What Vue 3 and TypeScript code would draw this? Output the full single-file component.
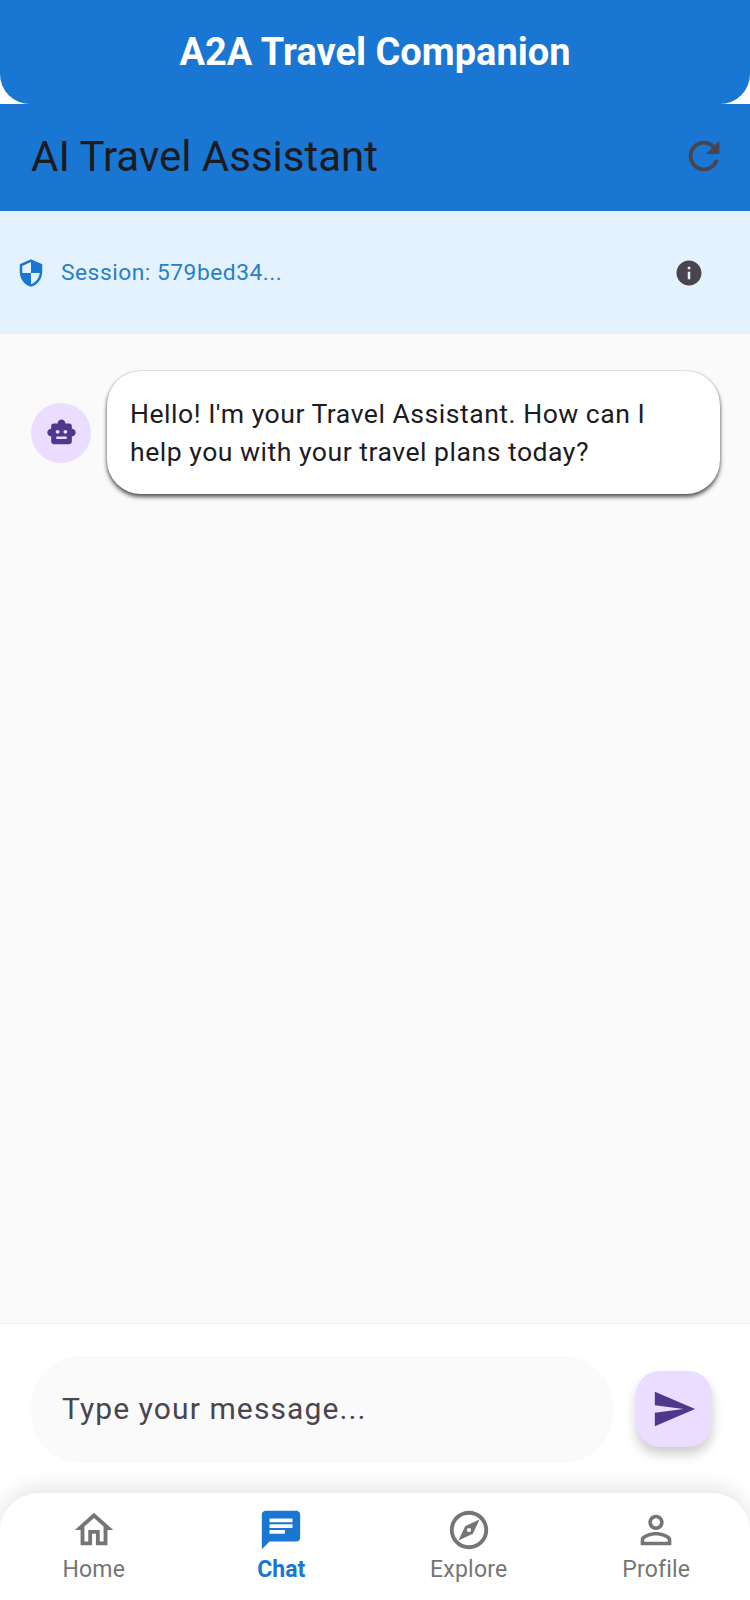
<script setup lang="ts">
interface NavItem {
  label: string
  path: string
  active?: boolean
}

const navItems: NavItem[] = [
  { label: 'Home', path: 'M12 5.69l5 4.5V18h-2v-6H9v6H7v-7.81l5-4.5M12 3L2 12h3v8h6v-6h2v6h6v-8h3L12 3z' },
  {
    label: 'Chat',
    active: true,
    path: 'M20 2H4c-1.1 0-1.99.9-1.99 2L2 22l4-4h14c1.1 0 2-.9 2-2V4c0-1.1-.9-2-2-2zM6 9h12v2H6V9zm8 5H6v-2h8v2zm4-6H6V6h12v2z',
  },
  {
    label: 'Explore',
    path: 'M12 2C6.48 2 2 6.48 2 12s4.48 10 10 10 10-4.48 10-10S17.52 2 12 2zm0 18c-4.41 0-8-3.59-8-8s3.59-8 8-8 8 3.59 8 8-3.59 8-8 8zm-5.5-2.5l7.51-3.49L17.5 6.5 9.99 9.99 6.5 17.5zm5.5-6.6c.61 0 1.1.49 1.1 1.1s-.49 1.1-1.1 1.1-1.1-.49-1.1-1.1.49-1.1 1.1-1.1z',
  },
  {
    label: 'Profile',
    path: 'M12 5.9c1.16 0 2.1.94 2.1 2.1s-.94 2.1-2.1 2.1S9.9 9.16 9.9 8s.94-2.1 2.1-2.1m0 9c2.97 0 6.1 1.46 6.1 2.1v1.1H5.9V17c0-.64 3.13-2.1 6.1-2.1M12 4C9.79 4 8 5.79 8 8s1.79 4 4 4 4-1.79 4-4-1.79-4-4-4zm0 9c-2.67 0-8 1.34-8 4v3h16v-3c0-2.66-5.33-4-8-4z',
  },
]
</script>

<template>
  <div class="screen">
    <header class="top-bar">A2A Travel Companion</header>

    <div class="app-bar">
      <span class="app-bar-title">AI Travel Assistant</span>
      <svg class="icon-refresh" viewBox="0 0 24 24">
        <path d="M17.65 6.35C16.2 4.9 14.21 4 12 4c-4.42 0-7.99 3.58-7.99 8s3.57 8 7.99 8c3.73 0 6.84-2.55 7.73-6h-2.08c-.82 2.33-3.04 4-5.65 4-3.31 0-6-2.69-6-6s2.69-6 6-6c1.66 0 3.14.69 4.22 1.78L13 11h7V4l-2.35 2.35z" />
      </svg>
    </div>

    <div class="session">
      <svg class="icon-shield" viewBox="0 0 24 24">
        <path d="M12 1L3 5v6c0 5.55 3.84 10.74 9 12 5.16-1.26 9-6.45 9-12V5l-9-4zm0 10.99h7c-.53 4.12-3.28 7.79-7 8.94V12H5V6.3l7-3.11v8.8z" />
      </svg>
      <span class="session-text">Session: 579bed34...</span>
      <svg class="icon-info" viewBox="0 0 24 24">
        <path d="M12 2C6.48 2 2 6.48 2 12s4.48 10 10 10 10-4.48 10-10S17.52 2 12 2zm1 15h-2v-6h2v6zm0-8h-2V7h2v2z" />
      </svg>
    </div>

    <main class="messages">
      <div class="message">
        <div class="avatar">
          <svg class="icon-bot" viewBox="0 0 24 24">
            <path d="M20 9V7c0-1.1-.9-2-2-2h-3c0-1.66-1.34-3-3-3S9 3.34 9 5H6c-1.1 0-2 .9-2 2v2c-1.66 0-3 1.34-3 3s1.34 3 3 3v4c0 1.1.9 2 2 2h12c1.1 0 2-.9 2-2v-4c1.66 0 3-1.34 3-3s-1.34-3-3-3zM7.5 11.5C7.5 10.67 8.17 10 9 10s1.5.67 1.5 1.5S9.83 13 9 13s-1.5-.67-1.5-1.5zM16 17H8v-2h8v2zm-1-4c-.83 0-1.5-.67-1.5-1.5S14.17 10 15 10s1.5.67 1.5 1.5S15.83 13 15 13z" />
          </svg>
        </div>
        <div class="bubble">Hello! I'm your Travel Assistant. How can I help you with your travel plans today?</div>
      </div>
    </main>

    <div class="composer">
      <div class="input">Type your message...</div>
      <button class="send" type="button" aria-label="Send">
        <svg class="icon-send" viewBox="0 0 24 24">
          <path d="M2.01 21L23 12 2.01 3 2 10l15 2-15 2z" />
        </svg>
      </button>
    </div>

    <nav class="bottom-nav">
      <div
        v-for="item in navItems"
        :key="item.label"
        class="nav-item"
        :class="{ 'nav-item--active': item.active }"
      >
        <svg class="nav-icon" viewBox="0 0 24 24"><path :d="item.path" /></svg>
        <span class="nav-label">{{ item.label }}</span>
      </div>
    </nav>
  </div>
</template>

<style>
html,
body {
  margin: 0;
  background: #fff;
}
</style>

<style scoped>
.screen {
  display: flex;
  flex-direction: column;
  width: 750px;
  height: 1600px;
  overflow: hidden;
  background: #fff;
  font-family: Roboto, 'Liberation Sans', sans-serif;
}

svg {
  display: block;
  flex-shrink: 0;
  fill: currentColor;
}

.top-bar {
  display: flex;
  align-items: center;
  justify-content: center;
  height: 104px;
  border-radius: 0 0 30px 30px;
  background: #1976d2;
  color: #fff;
  font-size: 38px;
  font-weight: 700;
}

.app-bar {
  display: flex;
  align-items: center;
  justify-content: space-between;
  height: 107px;
  padding: 0 23px 3px 31px;
  box-sizing: border-box;
  background: #1976d2;
  color: #1c1b1f;
}

.app-bar-title {
  font-size: 42px;
}

.icon-refresh {
  width: 46px;
  height: 46px;
  color: #49454f;
}

.session {
  display: flex;
  align-items: center;
  height: 123px;
  padding: 0 46px 0 16px;
  box-sizing: border-box;
  background: #e3f2fd;
}

.icon-shield {
  width: 30px;
  height: 30px;
  color: #1976d2;
}

.session-text {
  flex: 1;
  margin-left: 15px;
  color: #2a7fc4;
  font-size: 22.8px;
  letter-spacing: 0.5px;
}

.icon-info {
  width: 30px;
  height: 30px;
  color: #49454f;
}

.messages {
  flex: 1;
  padding: 37px 30px 0 31px;
  background: #fafafa;
}

.message {
  display: flex;
  align-items: center;
  gap: 16px;
}

.avatar {
  display: flex;
  align-items: center;
  justify-content: center;
  width: 60px;
  height: 60px;
  border-radius: 50%;
  background: #eaddff;
  flex-shrink: 0;
}

.icon-bot {
  width: 31px;
  height: 31px;
  color: #4f378b;
}

.bubble {
  flex: 1;
  padding: 24px 60px 23px 23px;
  border-radius: 34px;
  background: #fff;
  box-shadow: 0 3px 4px rgba(0, 0, 0, 0.65), 0 0 2px rgba(0, 0, 0, 0.25);
  color: #1c1b1f;
  font-size: 26.6px;
  line-height: 38px;
  letter-spacing: 0.5px;
}

.composer {
  display: flex;
  align-items: center;
  height: 170px;
  padding: 1px 38px 0 31px;
  border-top: 1px solid #eeeeee;
  box-sizing: border-box;
  background: #fff;
}

.input {
  flex: 1;
  display: flex;
  align-items: center;
  height: 107px;
  padding: 0 0 2px 31px;
  box-sizing: border-box;
  border-radius: 50px;
  background: #fafafa;
  color: #49454f;
  font-size: 30px;
  letter-spacing: 1.1px;
}

.send {
  display: flex;
  align-items: center;
  justify-content: center;
  width: 76px;
  height: 76px;
  margin-left: 23px;
  padding: 0;
  border: none;
  border-radius: 24px;
  background: #eaddff;
  box-shadow: 0 7px 12px rgba(0, 0, 0, 0.2);
  color: #4f378b;
}

.icon-send {
  width: 46px;
  height: 46px;
}

.bottom-nav {
  display: grid;
  grid-template-columns: repeat(4, 1fr);
  height: 107px;
  border-radius: 38px 38px 0 0;
  background: #fff;
  box-shadow: 0 -6px 20px rgba(0, 0, 0, 0.1);
}

.nav-item {
  display: flex;
  flex-direction: column;
  align-items: center;
  padding-top: 14px;
  color: #757575;
}

.nav-icon {
  width: 46px;
  height: 46px;
}

.nav-label {
  margin-top: 3px;
  font-size: 23px;
  line-height: 27px;
  letter-spacing: 0.2px;
}

.nav-item--active {
  color: #1976d2;
}

.nav-item--active .nav-label {
  font-weight: 700;
  letter-spacing: 0;
}
</style>
